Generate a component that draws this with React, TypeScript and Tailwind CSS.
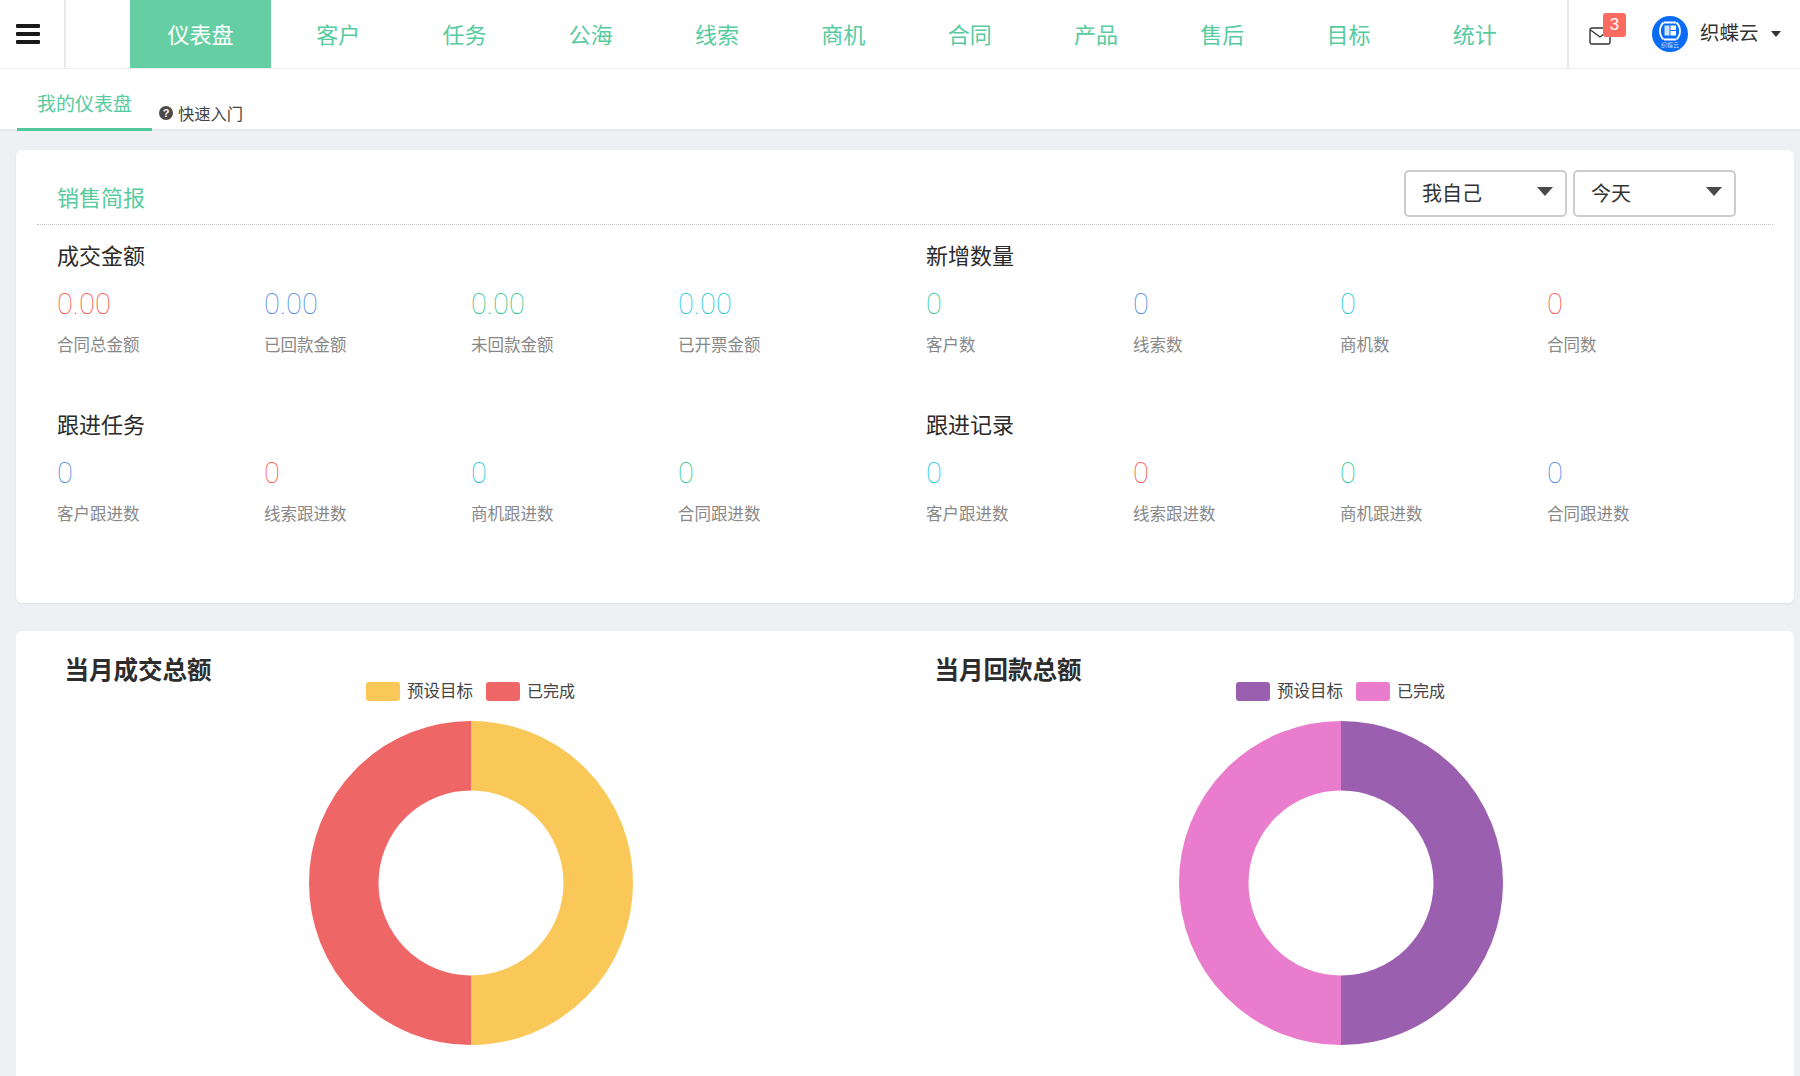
const NUM = "font-['Roboto'] font-thin";
const stats = [
  { title: "成交金额", items: [["0.00","合同总金额","text-[#ff4f42]"],["0.00","已回款金额","text-[#4a86e8]"],["0.00","未回款金额","text-[#2cc48c]"],["0.00","已开票金额","text-[#12c4dc]"]] },
  { title: "新增数量", items: [["0","客户数","text-[#2cc48c]"],["0","线索数","text-[#4a86e8]"],["0","商机数","text-[#12c4dc]"],["0","合同数","text-[#ff4f42]"]] },
  { title: "跟进任务", items: [["0","客户跟进数","text-[#4a86e8]"],["0","线索跟进数","text-[#ff4f42]"],["0","商机跟进数","text-[#12c4dc]"],["0","合同跟进数","text-[#2cc48c]"]] },
  { title: "跟进记录", items: [["0","客户跟进数","text-[#12c4dc]"],["0","线索跟进数","text-[#ff4f42]"],["0","商机跟进数","text-[#2cc48c]"],["0","合同跟进数","text-[#4a86e8]"]] },
];
const nav = ["客户","任务","公海","线索","商机","合同","产品","售后","目标","统计"];

function Donut({ right, left }: { right: string; left: string }) {
  const R = 127.25, w = 69.5;
  return (
    <svg width="324" height="324" viewBox="-162 -162 324 324" className="block">
      <path d={`M0 ${-R} A${R} ${R} 0 0 1 0 ${R}`} fill="none" stroke={right} strokeWidth={w} />
      <path d={`M0 ${R} A${R} ${R} 0 0 1 0 ${-R}`} fill="none" stroke={left} strokeWidth={w} />
    </svg>
  );
}

function Chart({ title, a, b }: { title: string; a: string; b: string }) {
  return (
    <div className="relative w-[870px] shrink-0">
      <div className="pl-[48.5px] pt-[22px] text-[24.5px] leading-[32px] font-bold text-[#2d2d2d]">{title}</div>
      <div className="flex justify-start pl-[350px] mt-[-4px] items-center h-[20px] text-[16.5px] text-[#444]">
        <span className="w-[34px] h-[19px] rounded-[3px]" style={{ background: a }} />
        <span className="ml-[7px] w-[66px] leading-[20px] relative top-[-1px]">预设目标</span>
        <span className="ml-[13px] w-[34px] h-[19px] rounded-[3px]" style={{ background: b }} />
        <span className="ml-[7px] leading-[20px] relative top-[-1px] text-[16px]">已完成</span>
      </div>
      <div className="pl-[293px] pt-[20px]"><Donut right={a} left={b} /></div>
    </div>
  );
}

export default function App() {
  return (
    <div className="h-[1076px] w-[1800px] overflow-hidden bg-[#eef0f4] font-['Noto_Sans_CJK_SC',sans-serif]">
      <header className="flex h-[69px] bg-white border-b border-[#eceef2]">
        <div className="w-[66px] border-r-2 border-[#e8e8ea] flex items-center pl-[16px]">
          <div className="flex flex-col gap-[4px] w-[24px]">
            <span className="h-[4px] rounded-[1px] bg-[#1a1a1a]" />
            <span className="h-[4px] rounded-[1px] bg-[#1a1a1a]" />
            <span className="h-[4px] rounded-[1px] bg-[#1a1a1a]" />
          </div>
        </div>
        <div className="w-[64px]" />
        <div className="w-[141px] bg-[#65cfa3] text-white text-[22px] pb-[2px] flex items-center justify-center">仪表盘</div>
        <nav className="flex pl-[4px] w-[1296px] grow-0">
          {nav.map(n => <div key={n} className="w-[126.3px] text-center text-[22px] leading-[66px] text-[#57cb9e]">{n}</div>)}
        </nav>
        <div className="flex-1 border-l-2 border-[#e8e8ea] relative flex items-center">
          <svg className="absolute left-[20px] top-[27px]" width="22" height="18" viewBox="0 0 22 18" fill="none" stroke="#333" strokeWidth="1.4">
            <rect x="1" y="1" width="20" height="16" rx="2" />
            <path d="M1.5 3l9.5 7 9.5-7" />
          </svg>
          <span className="absolute left-[34px] top-[13px] w-[23px] h-[24px] rounded-[3px] bg-[#fd6a5f] text-white text-[17px] leading-[24px] text-center font-['Liberation_Sans']">3</span>
          <svg className="absolute left-[83px] top-[16px]" width="36" height="36" viewBox="0 0 36 36">
            <circle cx="18" cy="18" r="18" fill="#0a6cf5" />
            <path d="M12 6.5 h12 M12 23.5 h12" stroke="#fff" strokeWidth="1.8" />
            <path d="M11.5 6.5 Q8 10 8 15 T11.5 23.5 M24.5 6.5 Q28 10 28 15 T24.5 23.5" fill="none" stroke="#fff" strokeWidth="1.8" />
            <rect x="12.5" y="9.5" width="5" height="10" fill="#cfe2ff" />
            <rect x="18.5" y="9.5" width="5.5" height="4.5" fill="#fff" />
            <rect x="18.5" y="15" width="5.5" height="4.5" fill="#fff" />
            <text x="18" y="31" textAnchor="middle" fontSize="6" fill="#bcd8ff">织蝶云</text>
          </svg>
          <span className="absolute left-[131px] top-[17px] text-[19.5px] leading-[30px] text-[#333]">织蝶云</span>
          <span className="absolute left-[202px] top-[31px] w-0 h-0 border-x-[5.5px] border-x-transparent border-t-[6px] border-t-[#333]" />
        </div>
      </header>

      <div className="flex h-[62px] bg-white border-b-2 border-[#e6e8ec]">
        <div className="ml-[17px] w-[135px] h-[62px] border-b-[3px] border-[#4fc99b] text-center text-[19px] leading-[68px] text-[#57cb9e]">我的仪表盘</div>
        <div className="ml-[7px] mt-[30px] flex items-center h-[28px] text-[#444]">
          <span className="w-[14px] h-[14px] rounded-full bg-[#4a4a4a] text-white text-[11px] leading-[14px] text-center font-bold font-['Liberation_Sans']">?</span>
          <span className="ml-[5px] text-[16.3px]">快速入门</span>
        </div>
      </div>

      <main className="px-[16px] pr-[6px] pt-[19px]">
        <section className="h-[453px] bg-white rounded-[6px] shadow-[0_1px_2px_rgba(0,0,0,0.08)] px-[21px]">
          <div className="flex items-end h-[75px] border-b border-dotted border-[#c4c4c4] relative">
            <div className="pl-[20px] text-[22px] leading-[32px] pb-[12px] text-[#57cb9e]">销售简报</div>
            <div className="absolute right-[37px] top-[20px] flex gap-[6px]">
              {["我自己","今天"].map(t => (
                <div key={t} className="w-[163px] h-[47px] border-2 border-[#ccc] rounded-[5px] flex items-center justify-between pl-[16px] pr-[12px] text-[20px] text-[#333]">
                  <span className="relative top-[-1px]">{t}</span>
                  <span className="w-0 h-0 border-x-[8px] border-x-transparent border-t-[9px] border-t-[#4a4a4a] mt-[-4px]" />
                </div>
              ))}
            </div>
          </div>
          <div className="grid grid-cols-[869px_1fr] pl-[20px]">
            {stats.map(s => (
              <div key={s.title} className="h-[169px] pt-[13px]">
                <div className="text-[22px] leading-[32px] text-[#2a2a2a]">{s.title}</div>
                <div className="grid grid-cols-[207px_207px_207px_207px] mt-[16px]">
                  {s.items.map(([v, l, c]) => (
                    <div key={l}>
                      <div className={`${NUM} ${c} text-[29px] leading-[36px]`}>{v}</div>
                      <div className="mt-[10px] text-[16.5px] leading-[24px] text-[#888]">{l}</div>
                    </div>
                  ))}
                </div>
              </div>
            ))}
          </div>
        </section>
        <section className="mt-[28px] h-[500px] bg-white rounded-[6px] flex">
          <Chart title="当月成交总额" a="#fac858" b="#ef6666" />
          <Chart title="当月回款总额" a="#9b5fb0" b="#e97ccc" />
        </section>
      </main>
    </div>
  );
}
